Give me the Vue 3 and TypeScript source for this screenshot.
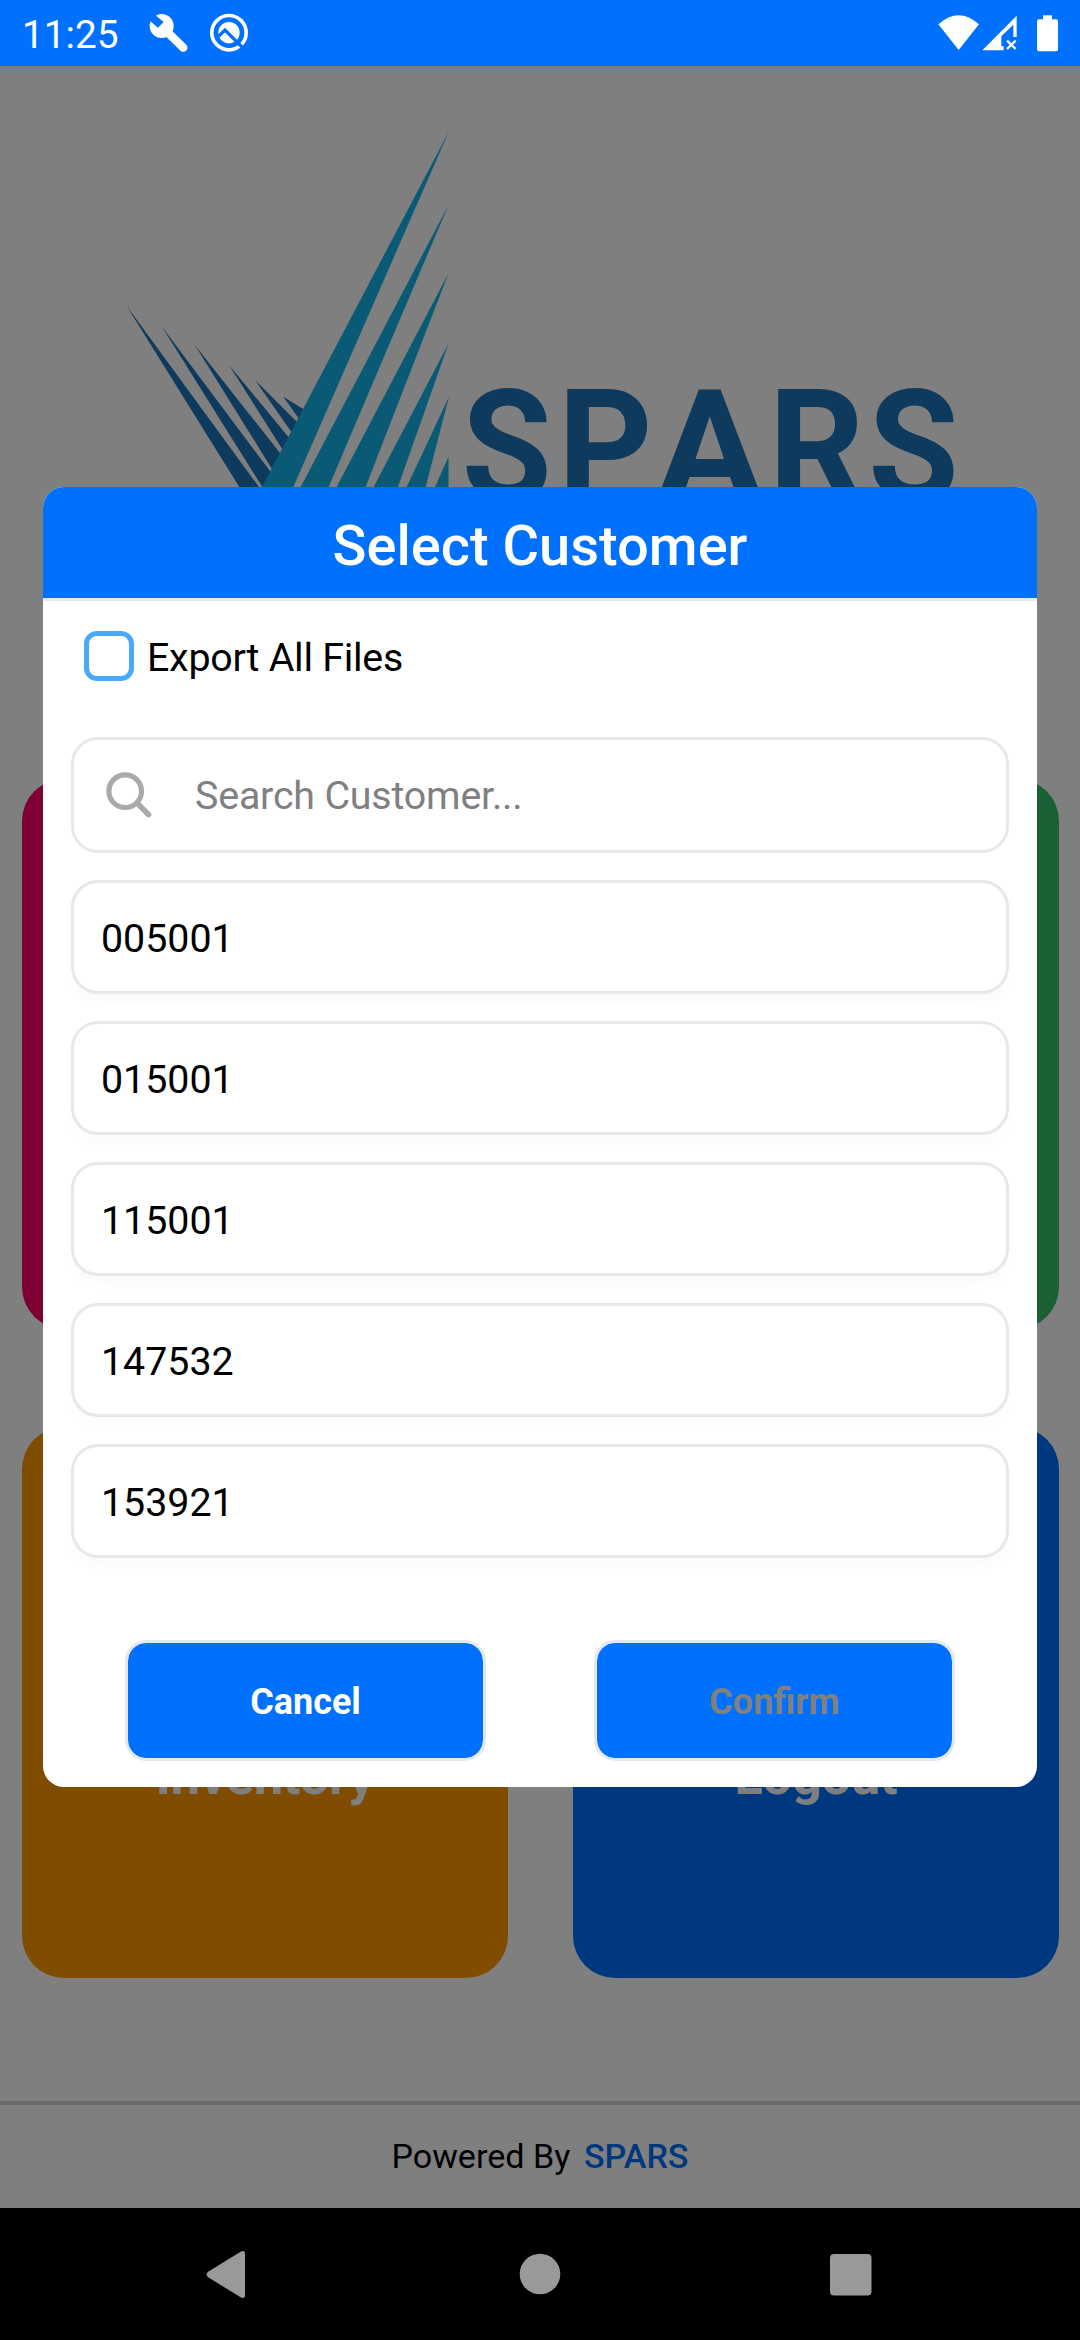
<script setup lang="ts">
import { ref } from 'vue'

interface Tile {
  id: string
  label: string
}

const tiles: Tile[] = [
  { id: 'pink', label: '' },
  { id: 'green', label: '' },
  { id: 'orange', label: 'Inventory' },
  { id: 'blue', label: 'Logout' },
]

const customers = ref<string[]>(['005001', '015001', '115001', '147532', '153921'])
</script>

<template>
  <div class="screen">
    <header class="status">
      <span class="clock">11:25</span>
      <svg class="wrench" viewBox="446 40 120 120">
        <circle cx="484" cy="79" r="36" fill="#fff" />
        <path d="M500 96L549 144" stroke="#fff" stroke-width="25" stroke-linecap="round" />
        <path d="M440 48L458 30L469 50L490 67L473 84L452 66Z" fill="#0070ff" />
      </svg>
      <svg class="badge" viewBox="628 40 120 120">
        <circle cx="688" cy="99" r="51.5" fill="none" stroke="#fff" stroke-width="11" />
        <circle cx="688" cy="99" r="32" fill="#fff" />
        <path d="M650 116L676 91L738 153" fill="none" stroke="#0070ff" stroke-width="10" />
      </svg>
      <span class="spacer"></span>
      <svg class="wifi" viewBox="114 44 123 108">
        <path d="M115 72Q176 18 237 72L176 149Z" fill="#fff" />
      </svg>
      <svg class="cell" viewBox="246 44 108 108">
        <path d="M247 150L350 46V110H340V73L304 108V138H311V150Z" fill="#fff" />
        <path d="M321 121L347 146M347 121L321 146" stroke="#fff" stroke-width="7" />
      </svg>
      <svg class="battery" viewBox="411 44 63 111">
        <rect x="411" y="57" width="63" height="96" rx="6" fill="#fff" />
        <rect x="429" y="45" width="27" height="16" fill="#fff" />
      </svg>
    </header>

    <main class="home">
      <svg class="logo" viewBox="0 66 1080 713">
        <g transform="translate(110 120) scale(.33333)">
          <g fill="#1a74ba">
            <path d="M50 558L388 1101L426 1161H490L447 1101Z" />
            <path d="M155 619L457 1101H470L485 1060Z" />
            <path d="M255 676L491 1055L517 1008Z" />
            <path d="M357 735L522 995L542 959Z" />
            <path d="M435 780L550 944L567 912Z" />
            <path d="M520 830L569 899L588 872Z" />
          </g>
          <g fill="#16b4ea">
            <path d="M1016 36L456 1101H550Z" />
            <path d="M1016 254L572 1101H656Z" />
            <path d="M1016 459L680 1101H767Z" />
            <path d="M1016 670L791 1101H864Z" />
            <path d="M1017 830L890 1101H947Z" />
            <path d="M1015.500 1010L975 1101H1015.500Z" />
          </g>
        </g>
        <text class="wordmark" y="500"><tspan x="461.8" textLength="90" lengthAdjust="spacingAndGlyphs">S</tspan><tspan x="558" textLength="94.5" lengthAdjust="spacingAndGlyphs">P</tspan><tspan x="656.3" textLength="107" lengthAdjust="spacingAndGlyphs">A</tspan><tspan x="768.7" textLength="95.5" lengthAdjust="spacingAndGlyphs">R</tspan><tspan x="868.2" textLength="90.5" lengthAdjust="spacingAndGlyphs">S</tspan></text>
      </svg>

      <section class="tiles">
        <div v-for="tile in tiles" :key="tile.id" class="tile" :class="tile.id">
          <span v-if="tile.label">{{ tile.label }}</span>
        </div>
      </section>

      <footer class="powered">
        <span>Powered By</span>
        <b>SPARS</b>
      </footer>

      <div class="scrim">
        <section class="dialog">
          <h1>Select Customer</h1>
          <label class="export">
            <i class="box"></i>
            <span>Export All Files</span>
          </label>
          <div class="search">
            <svg viewBox="0 0 46 46">
              <circle cx="19.200" cy="19.200" r="16.300" fill="none" stroke="#aaa" stroke-width="5.200" />
              <path d="M31 31L42.500 42.500" stroke="#aaa" stroke-width="5.600" stroke-linecap="round" />
            </svg>
            <span>Search Customer...</span>
          </div>
          <ul>
            <li v-for="customer in customers" :key="customer">{{ customer }}</li>
          </ul>
          <div class="actions">
            <button>Cancel</button>
            <button class="off">Confirm</button>
          </div>
        </section>
      </div>
    </main>

    <nav class="navbar">
      <svg viewBox="0 0 1080 132">
        <g fill="#999">
          <path d="M208.500 63.500L241 43.500Q245 42 245 46V87Q245 91 241 89.500L208.500 69.500Q204.500 66.500 208.500 63.500Z" />
          <circle cx="540" cy="66" r="20.300" />
          <rect x="830" y="46" width="41.500" height="41.500" rx="4" />
        </g>
      </svg>
    </nav>
  </div>
</template>

<style>
body {
  margin: 0;
}
</style>

<style scoped>
.screen {
  width: 1080px;
  height: 2340px;
  display: flex;
  flex-direction: column;
  overflow: hidden;
  font-family: Roboto, sans-serif;
  background: #fff;
}
.screen * {
  box-sizing: border-box;
}
.status {
  height: 66px;
  flex: none;
  display: flex;
  align-items: flex-start;
  background: #0070ff;
  color: #fff;
}
.status svg {
  display: block;
  flex: none;
}
.clock {
  width: 126px;
  margin-left: 22px;
  padding-top: 12px;
  font-size: 38.800px;
  line-height: 45px;
}
.wrench {
  width: 40px;
  height: 40px;
  margin: 13.300px 0 0 0.700px;
}
.badge {
  width: 40px;
  height: 40px;
  margin: 13.300px 0 0 20.600px;
}
.spacer {
  flex: 1;
}
.wifi {
  width: 41px;
  height: 36px;
  margin: 14.700px 3px 0 0;
}
.cell {
  width: 36px;
  height: 36px;
  margin: 14.700px 19px 0 0;
}
.battery {
  width: 21px;
  height: 37px;
  margin: 14.700px 22px 0 0;
}
.home {
  height: 2142px;
  flex: none;
  position: relative;
  display: flex;
  flex-direction: column;
  background: #fff;
}
.logo {
  display: block;
  width: 1080px;
  height: 713px;
  flex: none;
}
.wordmark {
  font: 700 155px Roboto, sans-serif;
  fill: #1a74ba;
}
.tiles {
  display: grid;
  grid-template-columns: 486px 486px;
  grid-template-rows: 550px 551px;
  gap: 98px 65px;
  padding: 0 22px;
}
.tile {
  display: flex;
  align-items: flex-end;
  justify-content: center;
  padding-bottom: 171px;
  border-radius: 42px;
  color: #fff;
  font-size: 52.500px;
  font-weight: 700;
  letter-spacing: -0.300px;
  line-height: 62px;
}
.pink {
  background: #ff0064;
}
.green {
  background: #36be6a;
}
.orange {
  background: #ff9800;
}
.blue {
  background: #0070ff;
}
.powered {
  height: 107px;
  margin-top: auto;
  padding-top: 31px;
  display: flex;
  justify-content: center;
  gap: 13.500px;
  border-top: 4px solid #d2d3dc;
  font-size: 34.125px;
  line-height: 40px;
  color: #000;
}
.powered b {
  font-weight: 500;
  color: #0070ff;
}
.scrim {
  position: absolute;
  inset: 0;
  display: flex;
  align-items: center;
  justify-content: center;
  background: rgba(0, 0, 0, 0.5);
}
.dialog {
  width: 994px;
  height: 1300px;
  display: flex;
  flex-direction: column;
  border-radius: 21px;
  overflow: hidden;
  background: #fff;
}
h1 {
  margin: 0;
  height: 114px;
  flex: none;
  padding-top: 26px;
  background: #0070ff;
  border-bottom: 3px solid #e5e8ec;
  color: #fff;
  text-align: center;
  font-size: 56px;
  font-weight: 500;
  line-height: 66px;
}
.export {
  display: flex;
  height: 50px;
  flex: none;
  margin: 30px 0 56px 41px;
  gap: 13px;
  font-size: 39.375px;
  letter-spacing: -0.250px;
  line-height: 54px;
  color: #000;
}
.box {
  width: 50px;
  height: 50px;
  border: 5px solid #48a9f8;
  border-radius: 13px;
}
.search {
  height: 116px;
  flex: none;
  margin: 0 28px 27px;
  padding: 0 32px;
  display: flex;
  align-items: center;
  gap: 43px;
  border: 3px solid #e8e8e8;
  border-radius: 27px;
  font-size: 39.375px;
  letter-spacing: -0.180px;
  color: #808080;
}
.search svg {
  width: 46px;
  height: 46px;
}
ul {
  list-style: none;
  margin: 0 28px;
  padding: 0;
  display: flex;
  flex-direction: column;
  gap: 27px;
}
li {
  height: 114px;
  padding-left: 27px;
  border: 3px solid #e8e8e8;
  border-radius: 27px;
  background: #fff;
  box-shadow: 0 10px 12px -2px rgba(0, 0, 0, 0.018);
  font-size: 39.375px;
  line-height: 112px;
  color: #000;
}
.actions {
  display: flex;
  justify-content: center;
  gap: 108px;
  margin-top: 82px;
}
button {
  width: 361px;
  height: 121px;
  padding: 3px 0 0;
  border: 3px solid #e5e8ec;
  border-radius: 21px;
  background: #0070ff;
  background-clip: padding-box;
  color: #fff;
  font: 700 36px/112px Roboto, sans-serif;
}
.off {
  color: #808080;
}
.navbar {
  height: 132px;
  flex: none;
  background: #000;
}
.navbar svg {
  display: block;
  width: 1080px;
  height: 132px;
}
</style>
